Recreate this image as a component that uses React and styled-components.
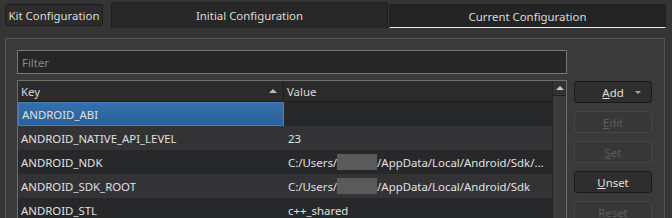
import styled, { createGlobalStyle } from "styled-components";

const GlobalStyle = createGlobalStyle`
  html, body { margin: 0; padding: 0; background: #353535; }
  body { font-family: "Noto Sans", "Open Sans", sans-serif; font-size: 11.4px; color: #d4d4d4; }
`;

const rows = [
  { key: "ANDROID_ABI", value: "", selected: true },
  { key: "ANDROID_NATIVE_API_LEVEL", value: "23" },
  { key: "ANDROID_NDK", pre: "C:/Users/", post: "/AppData/Local/Android/Sdk/..." },
  { key: "ANDROID_SDK_ROOT", pre: "C:/Users/", post: "/AppData/Local/Android/Sdk" },
  { key: "ANDROID_STL", value: "c++_shared" },
];

const buttons = [
  { label: "Add", mn: "A", rest: "dd", enabled: true, menu: true },
  { label: "Edit", mn: "E", rest: "dit" },
  { label: "Set", mn: "S", rest: "et" },
  { label: "Unset", mn: "U", rest: "nset", enabled: true },
  { label: "Reset", mn: "", rest: "Reset" },
];

const Screen = styled.div`
  width: 672px;
  height: 218px;
  overflow: hidden;
  background: #353535;
  box-sizing: border-box;
  padding: 2px 0 0 5px;
`;

const TabBar = styled.div`
  display: flex;
  align-items: flex-start;
  height: 27px;
`;

const KitButton = styled.div`
  margin-top: 2px;
  width: 98px;
  height: 22px;
  box-sizing: border-box;
  border: 1px solid #1c1c1c;
  border-radius: 3px;
  background: #2c2c2c;
  display: flex;
  align-items: center;
  justify-content: center;
  color: #dcdcdc;
`;

const Tab = styled.div`
  margin-left: ${(p) => p.$gap}px;
  margin-top: ${(p) => (p.$raised ? 0 : 2)}px;
  width: ${(p) => p.$w}px;
  height: ${(p) => (p.$raised ? 26 : 24)}px;
  box-sizing: border-box;
  border: 1px solid #1f1f1f;
  border-bottom: ${(p) => (p.$current ? "1px solid #e8e8e8" : "none")};
  border-radius: 3px 3px 0 0;
  background: ${(p) => (p.$raised ? "#272727" : "#242424")};
  display: flex;
  align-items: center;
  justify-content: center;
  color: #dcdcdc;
`;

const Panel = styled.div`
  margin-top: 9px;
  width: 660px;
  height: 200px;
  box-sizing: border-box;
  border: 1px solid #555;
  background: #3a3a3a;
  padding: 11px 12px 0 11px;
`;

const FilterInput = styled.div`
  width: 550px;
  height: 24px;
  box-sizing: border-box;
  border: 1px solid #767676;
  background: #262626;
  color: #8a8a8a;
  padding-left: 4px;
  display: flex;
  align-items: center;
`;

const Body = styled.div`
  margin-top: 6px;
  display: flex;
  gap: 7px;
`;

const Table = styled.div`
  width: 550px;
  height: 160px;
  box-sizing: border-box;
  border: 1px solid #6e6e6e;
  border-bottom: none;
  display: flex;
  background: #27282a;
`;

const Grid = styled.div`
  flex: 1;
  display: flex;
  flex-direction: column;
`;

const HeaderRow = styled.div`
  display: flex;
  height: 20px;
  background: #2b2b2b;
  border-bottom: 1px solid #1c1c1c;
`;

const HeaderCell = styled.div`
  width: ${(p) => p.$w || "auto"};
  flex: ${(p) => (p.$w ? "none" : 1)};
  box-sizing: border-box;
  border-right: ${(p) => (p.$w ? "1px solid #1e1e1e" : "none")};
  display: flex;
  align-items: center;
  justify-content: space-between;
  padding: 0 6px 0 3px;
  color: #d8d8d8;
`;

const SortArrow = styled.span`
  width: 0;
  height: 0;
  border-left: 4px solid transparent;
  border-right: 4px solid transparent;
  border-bottom: 4px solid #bdbdbd;
`;

const Row = styled.div`
  display: flex;
  height: 24px;
  background: ${(p) => (p.$alt ? "#333335" : "#27282a")};
`;

const Cell = styled.div`
  width: ${(p) => p.$w || "auto"};
  flex: ${(p) => (p.$w ? "none" : 1)};
  box-sizing: border-box;
  display: flex;
  align-items: center;
  padding-left: ${(p) => (p.$w ? 3 : 4)}px;
  white-space: nowrap;
  overflow: hidden;
  color: #e0e0e0;
  background: ${(p) => (p.$selected ? "linear-gradient(#3570aa, #2a609b)" : "transparent")};
  border: ${(p) => (p.$selected ? "1px solid #4a7fb6" : "none")};
`;

const Redacted = styled.span`
  display: inline-block;
  width: 40px;
  height: 16px;
  background: #5a5a5a;
`;

const ScrollBar = styled.div`
  width: 13px;
  border-left: 1px solid #222;
  background: #3b3b3b;
  display: flex;
  flex-direction: column;
`;

const ScrollButton = styled.div`
  height: 14px;
  border-bottom: 1px solid #222;
  background: #333;
  display: flex;
  align-items: center;
  justify-content: center;
`;

const UpArrow = styled.span`
  width: 0;
  height: 0;
  border-left: 4px solid transparent;
  border-right: 4px solid transparent;
  border-bottom: 4px solid #c8c8c8;
`;

const ButtonColumn = styled.div`
  display: flex;
  flex-direction: column;
  gap: 8px;
  padding-top: 1px;
`;

const Button = styled.div`
  position: relative;
  width: 78px;
  height: 22px;
  box-sizing: border-box;
  border: 1px solid ${(p) => (p.$enabled ? "#1b1b1b" : "#464646")};
  border-radius: 3px;
  background: ${(p) => (p.$enabled ? "#2e2e2e" : "#373737")};
  color: ${(p) => (p.$enabled ? "#e0e0e0" : "#5e5e5e")};
  display: flex;
  align-items: center;
  justify-content: center;
`;

const Mnemonic = styled.span`
  text-decoration: underline;
`;

const MenuArrow = styled.span`
  position: absolute;
  right: 10px;
  top: 9px;
  width: 0;
  height: 0;
  border-left: 3px solid transparent;
  border-right: 3px solid transparent;
  border-top: 3px solid #a8a8a8;
`;

export default function App() {
  return (
    <>
      <GlobalStyle />
      <Screen>
        <TabBar>
          <KitButton>Kit Configuration</KitButton>
          <Tab $gap={8} $w={277} $raised>Initial Configuration</Tab>
          <Tab $gap={1} $w={277} $current>Current Configuration</Tab>
        </TabBar>
        <Panel>
          <FilterInput>Filter</FilterInput>
          <Body>
            <Table>
              <Grid>
                <HeaderRow>
                  <HeaderCell $w="266px">
                    Key <SortArrow />
                  </HeaderCell>
                  <HeaderCell>Value</HeaderCell>
                </HeaderRow>
                {rows.map((r, i) => (
                  <Row key={r.key} $alt={i % 2 === 1}>
                    <Cell $w="266px" $selected={r.selected}>{r.key}</Cell>
                    <Cell>
                      {r.pre ? (
                        <>
                          {r.pre}
                          <Redacted />
                          {r.post}
                        </>
                      ) : (
                        r.value
                      )}
                    </Cell>
                  </Row>
                ))}
              </Grid>
              <ScrollBar>
                <ScrollButton>
                  <UpArrow />
                </ScrollButton>
              </ScrollBar>
            </Table>
            <ButtonColumn>
              {buttons.map((b) => (
                <Button key={b.label} $enabled={b.enabled}>
                  {b.mn && <Mnemonic>{b.mn}</Mnemonic>}
                  {b.rest}
                  {b.menu && <MenuArrow />}
                </Button>
              ))}
            </ButtonColumn>
          </Body>
        </Panel>
      </Screen>
    </>
  );
}
